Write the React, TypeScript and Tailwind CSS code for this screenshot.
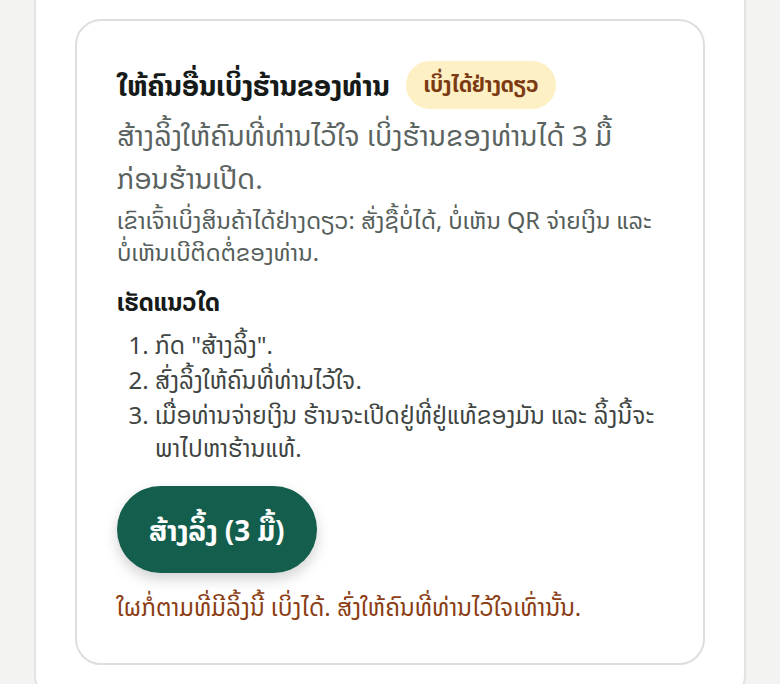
export default function App() {
  return (
    <div
      className="min-h-screen bg-[#f3f4f2] overflow-hidden"
      style={{ fontFamily: '"Noto Sans", "Noto Sans Lao", sans-serif' }}
    >
      <div className="mx-[34px] min-h-[700px] bg-white border-x-2 border-b-2 border-[#e3e4e2] rounded-b-3xl px-[39px] pt-[19px] pb-6">
        <div className="border-2 border-[#dedfdd] rounded-[26px] px-10 pt-10 pb-10">
          <div className="flex items-center gap-4">
            <h2 className="text-[28px] leading-[48px] font-bold text-[#161a18]">ໃຫ້ຄົນອື່ນເບິ່ງຮ້ານຂອງທ່ານ</h2>
            <span className="flex h-12 items-center rounded-full bg-[#fdf0c4] px-[18px] text-[21px] font-bold text-[#7b3a12]">
              ເບິ່ງໄດ້ຢ່າງດຽວ
            </span>
          </div>
          <p className="mt-[5px] text-[28px] leading-[43px] text-[#5a6360]">
            ສ້າງລິ້ງໃຫ້ຄົນທີ່ທ່ານໄວ້ໃຈ ເບິ່ງຮ້ານຂອງທ່ານໄດ້ 3 ມື້ ກ່ອນຮ້ານເປີດ.
          </p>
          <p className="mt-1 text-[23.5px] leading-[32px] text-[#555e5a]">
            ເຂົາເຈົ້າເບິ່ງສິນຄ້າໄດ້ຢ່າງດຽວ: ສັ່ງຊື້ບໍ່ໄດ້, ບໍ່ເຫັນ QR ຈ່າຍເງິນ ແລະ ບໍ່ເຫັນເບີຕິດຕໍ່ຂອງທ່ານ.
          </p>
          <h3 className="mt-[18px] text-[24px] leading-[32px] font-bold text-[#161a18]">ເຮັດແນວໃດ</h3>
          <ol className="mt-[10px] list-decimal pl-[38px] text-[24px] leading-[33px] text-[#3f4542]">
            <li>ກົດ "ສ້າງລິ້ງ".</li>
            <li className="mt-[2px]">ສົ່ງລິ້ງໃຫ້ຄົນທີ່ທ່ານໄວ້ໃຈ.</li>
            <li className="mt-[2px]">ເມື່ອທ່ານຈ່າຍເງິນ ຮ້ານຈະເປີດຢູ່ທີ່ຢູ່ແທ້ຂອງມັນ ແລະ ລິ້ງນີ້ຈະ ພາໄປຫາຮ້ານແທ້.</li>
          </ol>
          <button className="mt-[22px] h-[87px] rounded-full bg-[#135e4c] px-8 text-[28px] font-bold text-white shadow-[0_6px_14px_rgba(0,0,0,0.18)]">
            ສ້າງລິ້ງ (3 ມື້)
          </button>
          <p className="mt-[18px] text-[24px] leading-[32px] text-[#8b3d14]">
            ໃຜກໍ່ຕາມທີ່ມີລິ້ງນີ້ ເບິ່ງໄດ້. ສົ່ງໃຫ້ຄົນທີ່ທ່ານໄວ້ໃຈເທົ່ານັ້ນ.
          </p>
        </div>
      </div>
    </div>
  );
}
